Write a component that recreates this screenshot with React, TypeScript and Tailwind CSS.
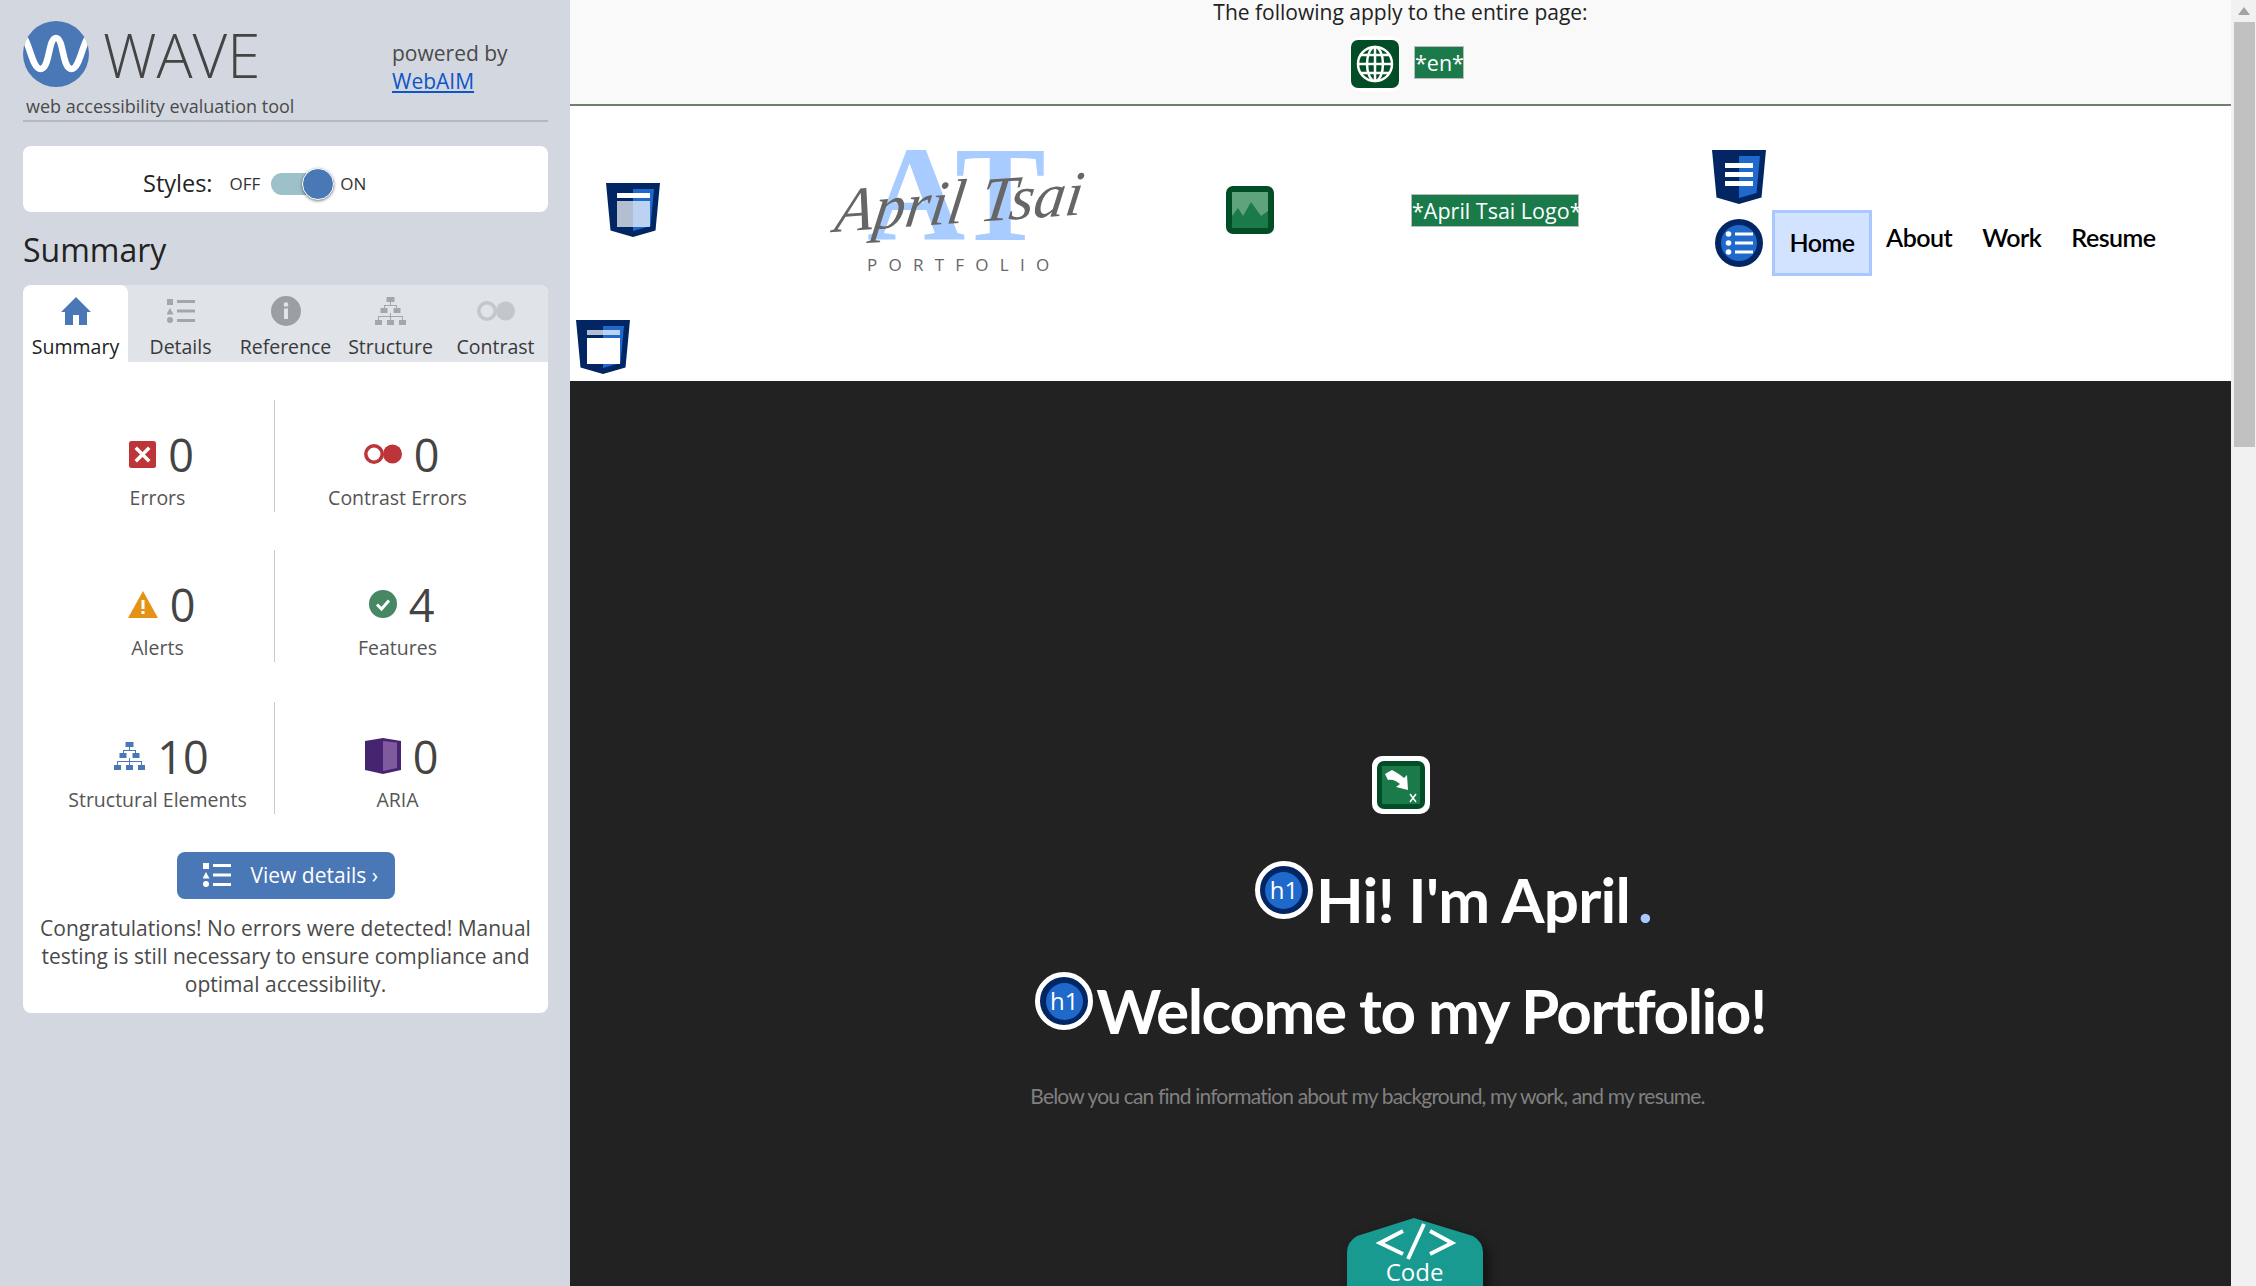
import React from 'react';

const BLUE = '#4a77b6';
const GREY = '#a3a7ab';

const WaveLogo = () => (
  <svg width="66" height="66" viewBox="0 0 66 66" className="shrink-0">
    <defs>
      <clipPath id="wc"><circle cx="33" cy="33" r="33" /></clipPath>
    </defs>
    <circle cx="33" cy="33" r="33" fill={BLUE} />
    <path clipPath="url(#wc)" d="M-3 15 C6 13 8 48 17.500 48 C27 48 25 17 33 17 C41 17 39 48 48.500 48 C58 48 60 13 69 15" fill="none" stroke="#fff" strokeWidth="6.500" />
  </svg>
);

const HomeIcon = () => (
  <svg width="30" height="28" viewBox="0 0 30 28"><path d="M15 0 L30 15 H26 V28 H18 V18 H12 V28 H4 V15 H0 Z" fill={BLUE} /></svg>
);

const DetailsIcon = ({ color = GREY, w = 28, h = 25 }: { color?: string; w?: number; h?: number }) => (
  <svg width={w} height={h} viewBox="0 0 28 25" fill={color}>
    <rect x="0" y="0" width="6" height="6" />
    <path d="M3 9 L6.500 15.500 H-0.500 Z" />
    <circle cx="3" cy="21" r="3" />
    <rect x="10" y="1" width="18" height="3" />
    <rect x="10" y="10.500" width="18" height="3" />
    <rect x="10" y="20" width="18" height="3" />
  </svg>
);

const InfoIcon = () => (
  <svg width="30" height="30" viewBox="0 0 30 30">
    <circle cx="15" cy="15" r="15" fill="#9b9fa3" />
    <circle cx="15" cy="8.500" r="2.300" fill="#e0e3e8" />
    <rect x="13" y="12.500" width="4" height="10.500" fill="#e0e3e8" />
  </svg>
);

const TreeIcon = ({ color = GREY }: { color?: string }) => (
  <svg width="31" height="28" viewBox="0 0 31 28" fill={color}>
    <rect x="11.500" y="0" width="8" height="5" />
    <rect x="5.500" y="11" width="7" height="5" />
    <rect x="18.500" y="11" width="7" height="5" />
    <rect x="0" y="23" width="7" height="5" />
    <rect x="12" y="23" width="7" height="5" />
    <rect x="24" y="23" width="7" height="5" />
    <path d="M15 5h1v3h-1zM9 8h13v1h-13zM9 8h1v3h-1zM21 8h1v3h-1zM15 16h1v7h-1zM3 19h25v1h-25zM3 19h1v4h-1zM27 19h1v4h-1z" />
  </svg>
);

const ContrastIcon = ({ color, w = 38, h = 20 }: { color: string; w?: number; h?: number }) => (
  <svg width={w} height={h} viewBox="0 0 38 20">
    <circle cx="10" cy="10" r="8.200" fill="none" stroke={color} strokeWidth="3.500" />
    <circle cx="28.500" cy="10" r="9.500" fill={color} />
  </svg>
);

const ErrorIcon = () => (
  <svg width="27" height="27" viewBox="0 0 27 27">
    <rect width="27" height="27" rx="2.500" fill="#bd3538" />
    <path d="M8 8 L19 19 M19 8 L8 19" stroke="#fff" strokeWidth="3.500" strokeLinecap="square" />
  </svg>
);

const AlertIcon = () => (
  <svg width="30" height="27" viewBox="0 0 30 27">
    <path d="M15 0 L30 27 H0 Z" fill="#e59317" />
    <rect x="13.500" y="9" width="3" height="9" fill="#fff" />
    <rect x="13.500" y="20" width="3" height="3" fill="#fff" />
  </svg>
);

const CheckIcon = () => (
  <svg width="28" height="28" viewBox="0 0 28 28">
    <circle cx="14" cy="14" r="14" fill="#468764" />
    <path d="M8 14.500 L12.500 19 L20 10.500" fill="none" stroke="#fff" strokeWidth="3" />
  </svg>
);

const AriaIcon = () => (
  <svg width="36" height="36" viewBox="0 0 36 36">
    <path d="M0 3 L18 0 L36 3 V32 L18 36 L0 32 Z" fill="#46246f" />
    <path d="M18 3 L32 4.500 V30 L18 33 Z" fill="#7f5a9c" />
  </svg>
);

// WAVE's blue shield markers
const Shield = ({ children }: { children: React.ReactNode }) => (
  <svg width="54" height="54" viewBox="0 0 54 54" className="block shrink-0">
    <path d="M0 0 H54 L49.500 47.500 L27 54 L4.500 47.500 Z" fill="#012663" />
    <path d="M27 6 H48 L44.500 43 L27 48 Z" fill="#1f69cc" />
    {children}
  </svg>
);

const GreenIcon = ({ w, h, frame, children }: { w: number; h: number; frame: string; children: React.ReactNode }) => (
  <svg width={w} height={h} viewBox={`0 0 ${w} ${h}`} className="block shrink-0">
    <rect width={w} height={h} rx="10" fill={frame} />
    <rect x={(w - 48) / 2} y={(h - 48) / 2} width="48" height="48" rx="7" fill="#014d26" />
    <g transform={`translate(${(w - 48) / 2} ${(h - 48) / 2})`}>{children}</g>
  </svg>
);

const H1Badge = () => (
  <div className="flex h-[58px] w-[58px] shrink-0 items-center justify-center rounded-full border-[5px] border-white bg-[#012663]">
    <div className="flex h-[37px] w-[37px] items-center justify-center rounded-full bg-[#1f69cc] font-['Open_Sans',sans-serif] text-[24px] font-normal leading-none tracking-normal text-white">h1</div>
  </div>
);

const ListBadge = () => (
  <svg width="48" height="48" viewBox="0 0 48 48" className="block shrink-0">
    <circle cx="24" cy="24" r="24" fill="#012663" />
    <circle cx="24" cy="24" r="18" fill="#1f69cc" />
    <g fill="#fff">
      <circle cx="13.500" cy="15" r="2.800" />
      <circle cx="13.500" cy="24" r="2.800" />
      <circle cx="13.500" cy="33" r="2.800" />
      <rect x="20" y="13.500" width="18" height="3" />
      <rect x="20" y="22.500" width="18" height="3" />
      <rect x="20" y="31.500" width="18" height="3" />
    </g>
  </svg>
);

const tabs = [
  { label: 'Summary', icon: <HomeIcon />, active: true },
  { label: 'Details', icon: <DetailsIcon /> },
  { label: 'Reference', icon: <InfoIcon /> },
  { label: 'Structure', icon: <TreeIcon /> },
  { label: 'Contrast', icon: <ContrastIcon color="#c3c6ca" /> },
];

const stats = [
  [
    { icon: <ErrorIcon />, n: '0', label: 'Errors' },
    { icon: <ContrastIcon color="#bd3538" />, n: '0', label: 'Contrast Errors' },
  ],
  [
    { icon: <AlertIcon />, n: '0', label: 'Alerts' },
    { icon: <CheckIcon />, n: '4', label: 'Features' },
  ],
  [
    { icon: <TreeIcon color={BLUE} />, n: '10', label: 'Structural Elements' },
    { icon: <AriaIcon />, n: '0', label: 'ARIA' },
  ],
];

const Stat = ({ icon, n, label }: { icon: React.ReactNode; n: string; label: string }) => (
  <div className="flex flex-col items-center pt-[23px]">
    <div className="ml-[8px] flex h-[62px] items-center gap-[12px]">
      {icon}
      <span className="text-[45px] leading-none text-[#444]">{n}</span>
    </div>
    <span className="-mt-[1px] text-[19.500px] leading-[28px] text-[#555]">{label}</span>
  </div>
);

const Sidebar = () => (
  <aside className="flex w-[570px] shrink-0 flex-col bg-[#d3d8e0] pl-[23px] pr-[22px] pt-[20px]">
    <div className="flex h-[102px] border-b-2 border-[#b5b9bd]">
      <div className="w-[369px]">
        <div className="flex items-center">
          <WaveLogo />
          <span className="ml-[14px] mt-[2px] text-[60px] font-light leading-[66px] text-[#444]">WAVE</span>
        </div>
        <div className="ml-[3px] mt-[5px] text-[18px] leading-[26px] text-[#4a4a4a]">web accessibility evaluation tool</div>
      </div>
      <div className="pt-[19px] text-[21px] leading-[28px] text-[#4a4a4a]">
        <div>powered by</div>
        <a className="text-[#0d55c8] underline">WebAIM</a>
      </div>
    </div>

    <div className="mt-[24px] flex h-[66px] items-center rounded-lg bg-white pl-[120px] pt-[10px]">
      <span className="text-[23.500px] text-[#222]">Styles:</span>
      <span className="ml-[17px] text-[17px] text-[#333]">OFF</span>
      <div className="relative ml-[11px] h-[22px] w-[63px] rounded-full bg-[#9dc0c9]">
        <div className="absolute right-0 top-[-5px] h-[32px] w-[32px] rounded-full border border-white bg-[#4a77b6] shadow-[0_1px_3px_rgba(0,0,0,0.5)]" />
      </div>
      <span className="ml-[6px] text-[17px] text-[#333]">ON</span>
    </div>

    <h2 className="mt-[14px] text-[32px] font-normal leading-[48px] text-[#222]">Summary</h2>

    <div className="mt-[11px] h-[728px] overflow-hidden rounded-lg bg-white">
      <div className="grid h-[77px] grid-cols-5 bg-[#e0e3e8]">
        {tabs.map(t => (
          <div key={t.label} className={`flex flex-col items-center pt-[10px] ${t.active ? 'rounded-t-lg bg-white text-[#222]' : 'text-[#3a3a3a]'}`}>
            <div className="flex h-[32px] items-center">{t.icon}</div>
            <span className="mt-[7px] text-[19.500px] leading-[26px]">{t.label}</span>
          </div>
        ))}
      </div>

      <div className="pl-[18px] pr-[28px] pt-[38px]">
        {stats.map((row, i) => (
          <div key={i} className={`grid h-[105px] grid-cols-[234px_1fr] ${i === 1 ? 'mt-[45px]' : i === 2 ? 'mt-[47px]' : ''}`}>
            <div className="border-r border-[#c8c8c8]"><Stat {...row[0]} /></div>
            <Stat {...row[1]} />
          </div>
        ))}
      </div>

      <div className="mt-[45px] flex justify-center">
        <button className="flex h-[47px] w-[218px] items-center rounded-lg bg-[#4a77b6] pl-[26px] text-[21px] text-white">
          <DetailsIcon color="#fff" />
          <span className="ml-[20px]">View details ›</span>
        </button>
      </div>
      <p className="mt-[15px] px-[10px] text-center text-[21px] leading-[28px] text-[#4a4a4a]">
        Congratulations! No errors were detected! Manual testing is still necessary to ensure compliance and optimal accessibility.
      </p>
    </div>
  </aside>
);

const AprilLogo = () => (
  <div className="relative h-[130px] w-[300px] shrink-0">
    <div className="absolute left-[67px] top-[-27px] font-['Liberation_Serif',serif] text-[136px] font-bold leading-[136px] tracking-[0px] text-[#a8ccff]">AT</div>
    <div className="absolute left-[36px] top-[14px] -rotate-[4deg] -skew-x-12 whitespace-nowrap font-['Liberation_Serif',serif] text-[63px] italic leading-[70px] text-[#666]">April Tsai</div>
    <div className="absolute left-[67px] top-[102px] whitespace-nowrap text-[17px] font-normal leading-[20px] tracking-[11.250px] text-[#666]">PORTFOLIO</div>
  </div>
);

const AltLabel = ({ children, className }: { children: React.ReactNode; className: string }) => (
  <span className={`whitespace-nowrap border border-[#bbb] bg-[#1a7a4a] text-center text-[21.500px] leading-[31px] text-white ${className}`}>{children}</span>
);

const navLink = "font-['Lato',sans-serif] text-[25px] font-semibold tracking-[-0.5px] text-black";

const Page = () => (
  <main className="relative flex min-w-0 flex-1 flex-col overflow-hidden bg-[#222]">
    <div className="h-[106px] shrink-0 border-b-2 border-[#6f7f6f] bg-[#f9f9f9] text-center">
      <p className="text-[21px] leading-[24px] text-[#222]">The following apply to the entire page:</p>
      <div className="mt-[12px] flex items-start justify-center gap-[14px] pl-[13px]">
        <GreenIcon w={50} h={56} frame="#fff">
          <g fill="none" stroke="#fff" strokeWidth="2.500">
            <circle cx="24" cy="24" r="17" />
            <ellipse cx="24" cy="24" rx="8" ry="17" />
            <path d="M24 7 V41 M7 24 H41 M10 15 H38 M10 33 H38" />
          </g>
        </GreenIcon>
        <AltLabel className="mt-[10px] w-[50px]">*en*</AltLabel>
      </div>
    </div>

    <header className="h-[275px] shrink-0 bg-white">
      <div className="flex h-[208px] items-center pl-[36px]">
        <Shield>
          <rect x="11" y="10" width="33" height="5" fill="#fff" />
          <rect x="11" y="18" width="33" height="26" fill="#fff" fillOpacity="0.7" />
        </Shield>
        <div className="ml-[140px] mt-[15px]"><AprilLogo /></div>
        <div className="ml-[126px]">
          <GreenIcon w={48} h={48} frame="#014d26">
            <rect x="6" y="6" width="36" height="36" fill="#5fa37c" />
            <path d="M6 42 V30 L12 22 L17 30 L25 16 L35 30 L42 25 V42 Z" fill="#1a7a4a" />
          </GreenIcon>
        </div>
        <AltLabel className="ml-[137px] w-[168px]">*April Tsai Logo*</AltLabel>
        <nav className="ml-[133px] flex flex-col pt-[6px]">
          <Shield>
            <rect x="13" y="13" width="28" height="5" fill="#fff" />
            <rect x="13" y="22" width="28" height="5" fill="#fff" />
            <rect x="13" y="31" width="28" height="5" fill="#fff" />
          </Shield>
          <div className="mt-[6px] flex items-start">
            <div className="ml-[3px] mt-[9px]"><ListBadge /></div>
            <a className={`ml-[9px] flex h-[66px] w-[100px] items-center justify-center border-[3px] border-[#a8c8ff] bg-[#d2e3ff] ${navLink}`}>Home</a>
            <a className={`ml-[14px] mt-[9px] ${navLink}`}>About</a>
            <a className={`ml-[30px] mt-[9px] ${navLink}`}>Work</a>
            <a className={`ml-[30px] mt-[9px] ${navLink}`}>Resume</a>
          </div>
        </nav>
      </div>
      <div className="pl-[6px] pt-[6px]">
        <Shield>
          <rect x="11" y="10" width="33" height="5" fill="#fff" fillOpacity="0.7" />
          <rect x="11" y="18" width="33" height="26" fill="#fff" />
        </Shield>
      </div>
    </header>

    <section className="flex flex-1 flex-col items-center pt-[375px] font-['Lato',sans-serif] text-white">
      <GreenIcon w={58} h={58} frame="#fff">
        <rect x="5" y="5" width="38" height="38" fill="#1a7a4a" />
        <path d="M8 13 L15 9 C20 12 24 14 27 17 L30 14 L31 29 L19 26 L23 23 C19 19 14 18 11 19 Z" fill="#fff" />
        <path d="M33 33 L39 41 M39 33 L33 41" stroke="#fff" strokeWidth="1.500" />
      </GreenIcon>
      <h1 className="ml-[106px] mt-[47px] flex items-start text-[62px] font-bold leading-[62px] tracking-[-0.800px]">
        <H1Badge />
        <span className="ml-[3px] mt-[7px]">Hi! I'm April<span className="ml-[8px] text-[#a8c8ff]">.</span></span>
      </h1>
      <h1 className="mt-[42px] flex items-start text-[62px] font-bold leading-[62px] tracking-[-1.500px]">
        <H1Badge />
        <span className="ml-[3px] mt-[7px]">Welcome to my Portfolio!</span>
      </h1>
      <p className="mr-[66px] mt-[44px] text-[21px] leading-[21px] tracking-[-0.820px] text-[#808080]">Below you can find information about my background, my work, and my resume.</p>
      <div className="relative ml-[28px] mt-[112px] h-[100px] w-[136px] shrink-0 font-['Open_Sans',sans-serif]">
        <svg width="136" height="100" viewBox="0 0 136 100" className="absolute inset-0 drop-shadow-[5px_5px_6px_rgba(0,0,0,0.5)]">
          <path d="M67 0 L126 18 Q136 24 136 34 V100 H0 V34 Q0 24 10 18 Z" fill="#189a91" />
          <path d="M56 13 L33 25 L56 36 M83 13 L105 25 L83 36 M77 6 L61 41" fill="none" stroke="#fff" strokeWidth="4" />
        </svg>
        <span className="absolute inset-x-0 top-[38px] text-center text-[24px] leading-[32px] text-white">Code</span>
      </div>
    </section>
  </main>
);

const Scrollbar = () => (
  <div className="flex w-[25px] shrink-0 flex-col items-center bg-[#f1f1f1] pl-[1px]">
    <svg width="12" height="8" viewBox="0 0 12 8" className="mt-[7px]"><path d="M6 0 L12 8 H0 Z" fill="#a3a3a3" /></svg>
    <div className="mt-[7px] h-[425px] w-[21px] bg-[#c1c1c1]" />
  </div>
);

export default function App() {
  return (
    <div className="flex h-screen w-full overflow-hidden font-['Open_Sans',sans-serif]">
      <Sidebar />
      <Page />
      <Scrollbar />
    </div>
  );
}
